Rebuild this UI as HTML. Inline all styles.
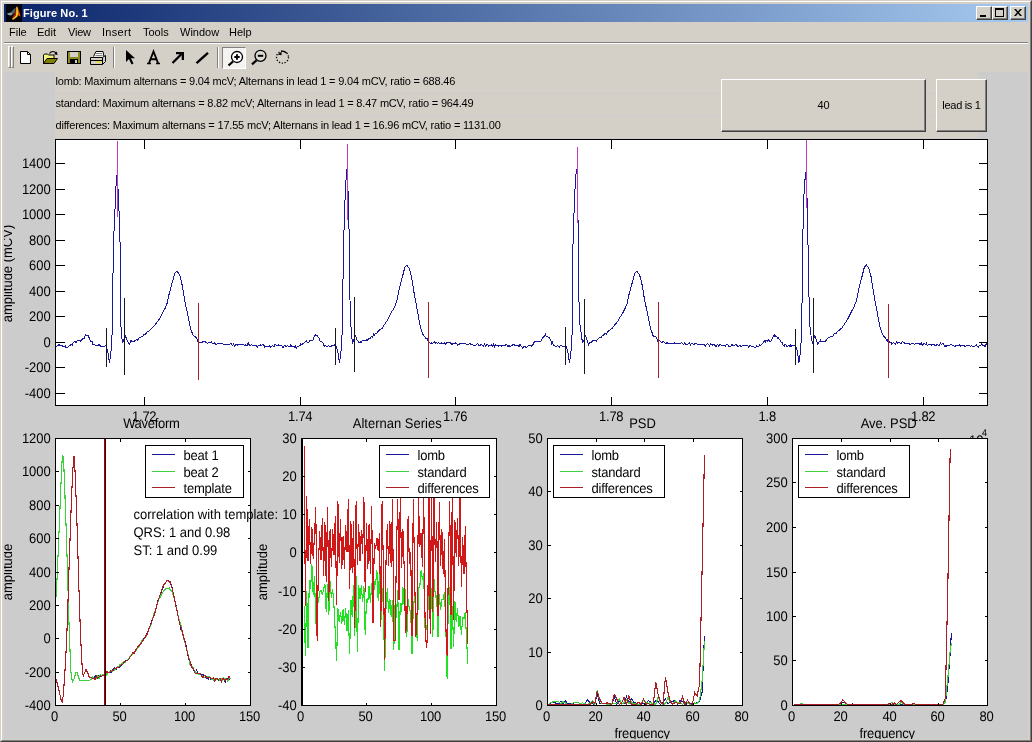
<!DOCTYPE html>
<html><head><meta charset="utf-8"><title>Figure No. 1</title>
<style>
*{box-sizing:border-box;margin:0;padding:0}
html,body{width:1032px;height:742px;overflow:hidden;background:#d4d0c8}
body{position:relative;will-change:transform;font-family:"Liberation Sans",sans-serif;font-size:11px;color:#000}
.abs{position:absolute}
#frame{left:0;top:0;width:1032px;height:742px;border-style:solid;border-width:1px;border-color:#d4d0c8 #404040 #404040 #d4d0c8}
#frame2{left:1px;top:1px;width:1030px;height:740px;border-style:solid;border-width:1px;border-color:#fff #808080 #808080 #fff}
#title{left:4px;top:4px;width:1024px;height:18px;background:linear-gradient(to right,#0a246a 0%,#a6caf0 100%)}
#title .t{left:19px;top:2px;font-weight:bold;font-size:11px;color:#fff;line-height:14px;white-space:nowrap;letter-spacing:0.1px}
.wb{top:6px;width:16px;height:14px;background:#d4d0c8;border-style:solid;border-width:1px;border-color:#fff #404040 #404040 #fff;box-shadow:inset -1px -1px 0 #808080}
#menu{left:4px;top:22px;width:1024px;height:20px}
#menu span{position:absolute;top:3px;line-height:14px;font-size:11px;white-space:nowrap}
#sep1{left:4px;top:42px;width:1024px;height:1px;background:#808080}
#sep2{left:4px;top:43px;width:1024px;height:1px;background:#fff}
#tb{left:4px;top:44px;width:1024px;height:28px}
.grip{top:2px;width:3px;height:22px;border-style:solid;border-width:1px;border-color:#fff #808080 #808080 #fff;background:#d4d0c8}
.vsep{top:3px;width:2px;height:21px;border-left:1px solid #808080;border-right:1px solid #fff}
#fig{position:absolute;left:4px;top:72px;background:#cccccc}
.lab{left:55px;width:923px;height:21px;background:#d4d0c8;font-size:11px;line-height:13px;padding-top:3px;padding-left:0.5px;white-space:nowrap;letter-spacing:-0.19px}
.btn{background:#d4d0c8;border-style:solid;border-width:1px;border-color:#fff #404040 #404040 #fff;box-shadow:inset -1px -1px 0 #808080;font-size:11px;text-align:center;white-space:nowrap}
</style></head><body>
<div id="frame" class="abs"></div><div id="frame2" class="abs"></div>
<div id="title" class="abs">
<svg class="abs" style="left:2px;top:0px" width="16" height="18" viewBox="0 -1 16 18">
<rect y="-1" width="16" height="18" fill="#04040f"/>
<path d="M0.800 8.800L4.500 7.500 7.200 8.500 5 10.500 2.500 10z" fill="#8fa3a3"/>
<path d="M4.500 7.500L8.500 3.500 9.800 2.500 8.500 8.500 7.200 8.500z" fill="#456868"/>
<path d="M10.200 3L10 10 8.500 12 6.200 13.500 7 11 8.500 8.500z" fill="#a81808"/>
<path d="M11.800 2.500L13 6 14.800 11.800 12.500 10.200 11.500 11.500 12.200 8z" fill="#e25410"/>
<path d="M10.300 1.500L11.800 2.500 12.200 8 11.500 11.500 9 13.500 6.800 15 6.200 13.500 8.500 12 10 10 10.200 5z" fill="#ffc81e"/>
<path d="M10.500 2L11.500 3 11.600 7 10.800 7z" fill="#ff9a18"/>
</svg>
<div class="abs t">Figure No. 1</div>
</div>
<div class="abs wb" style="left:976px"><div class="abs" style="left:3px;top:8px;width:6px;height:2px;background:#000"></div></div>
<div class="abs wb" style="left:992px"><div class="abs" style="left:2px;top:1px;width:9px;height:9px;border:1px solid #000;border-top-width:2px"></div></div>
<div class="abs wb" style="left:1010px"><svg class="abs" style="left:3px;top:2px" width="8" height="7" viewBox="0 0 8 7"><path d="M0 0h2l2 2.5L6 0h2L5 3.5 8 7H6L4 4.5 2 7H0l3-3.5z" fill="#000"/></svg></div>
<div id="menu" class="abs"><span style="left:5px">File</span><span style="left:33px">Edit</span><span style="left:64px;letter-spacing:-0.2px">View</span><span style="left:98px;letter-spacing:0.3px">Insert</span><span style="left:139px">Tools</span><span style="left:176px">Window</span><span style="left:225px">Help</span></div>
<div id="sep1" class="abs"></div><div id="sep2" class="abs"></div>
<div id="tb" class="abs">
<div class="abs grip" style="left:4px"></div><div class="abs grip" style="left:7px"></div>
<div class="abs vsep" style="left:109px"></div><div class="abs vsep" style="left:213px"></div>
<div class="abs" style="left:218px;top:3px;width:24px;height:22px;background:#f4f3ef;border-style:solid;border-width:1px;border-color:#808080 #fff #fff #808080"></div>
<svg class="abs" style="left:0;top:0" width="300" height="28" viewBox="4 44 300 28">
<!-- new -->
<path d="M20.5 51.5h7l3 3v9h-10z" fill="#fff" stroke="#000"/><path d="M27.5 51.5v3h3" fill="none" stroke="#000"/>
<!-- open -->
<path d="M43.500 63.500v-8.500l1-1h3l1 1h5.500v3.500" fill="#f4f47a" stroke="#000"/><path d="M43.500 63.500l3.500-5h10.500l-3.500 5z" fill="#808000" stroke="#000"/><path d="M49.500 53.500c1.500-2.500 5-2.800 7 0" fill="none" stroke="#000" stroke-width="1.200"/><path d="M57.500 55l-3.500-.8 3-2.700z" fill="#000"/>
<!-- save -->
<rect x="67.5" y="51.5" width="13" height="12" fill="#8a8a1e" stroke="#000"/><rect x="70" y="52" width="8" height="5" fill="#d4d0c8"/><rect x="70" y="59" width="8" height="5" fill="#000"/><rect x="75" y="60" width="2" height="3" fill="#d4d0c8"/>
<!-- print -->
<path d="M93.5 56.5l2.5-5h7l1 5" fill="#fff" stroke="#000"/><path d="M90.5 57.5h12l3-2v6l-3 3h-12z" fill="#d4d0c8" stroke="#000"/><path d="M90.5 60.5h12M102.500 57.5v7" fill="none" stroke="#000"/><rect x="97" y="61" width="4" height="2" fill="#e8e020"/><path d="M96 53.500h6M95.500 55.500h7" stroke="#808080" fill="none"/>
<!-- pointer -->
<path d="M126 50v12l3-3 2.500 5.500 2-1-2.500-5.200h4z" fill="#000"/>
<!-- A -->
<path d="M149 63l4.500-11.500 4.500 11.500M150.800 59.300h5.400" fill="none" stroke="#000" stroke-width="1.900"/><path d="M147 63.500h4M156 63.500h4" stroke="#000" stroke-width="1.400" fill="none"/>
<!-- arrow -->
<path d="M172.500 63l9-9" fill="none" stroke="#000" stroke-width="2.300"/><path d="M176 52h8v8h-2.300v-5.700h-5.700z" fill="#000"/>
<!-- line -->
<path d="M196.500 63.200l11.500-10.400" fill="none" stroke="#000" stroke-width="2.400"/>
<!-- zoom in -->
<circle cx="237" cy="57" r="5.500" fill="#fff" stroke="#000" stroke-width="1.300"/><path d="M233 61.500l-4.500 4" stroke="#000" stroke-width="2.300" fill="none"/><path d="M234.300 57h5.400M237 54.300v5.400" stroke="#000" stroke-width="1.900" fill="none"/>
<!-- zoom out -->
<circle cx="260.500" cy="55.800" r="5.500" fill="#dedbd4" stroke="#000" stroke-width="1.300"/><path d="M256.500 60.300l-4.500 4" stroke="#000" stroke-width="2.300" fill="none"/><path d="M257.800 55.800h5.400" stroke="#000" stroke-width="2" fill="none"/>
<!-- rotate -->
<circle cx="282.500" cy="57.200" r="6" fill="none" stroke="#000" stroke-width="1.300" stroke-dasharray="1.300 1.600"/><path d="M277.500 54.500l4-2.800v3.600z" fill="#000"/><path d="M281 51.300c2-.4 4 .2 5.500 1.600" fill="none" stroke="#000" stroke-width="1.300"/>
</svg>
</div>
<svg id="fig" width="1024" height="667" viewBox="4 72 1024 667" font-family='"Liberation Sans", sans-serif' shape-rendering="crispEdges" text-rendering="geometricPrecision"><defs><clipPath id="cm"><rect x="55.5" y="139.5" width="932" height="266"/></clipPath><clipPath id="c0"><rect x="55.5" y="438.5" width="195" height="267"/></clipPath><clipPath id="c1"><rect x="301.5" y="438.5" width="195" height="267"/></clipPath><clipPath id="c2"><rect x="547.5" y="438.5" width="195" height="267"/></clipPath><clipPath id="c3"><rect x="792.5" y="438.5" width="195" height="267"/></clipPath></defs><rect x="55.5" y="139.5" width="932" height="266" fill="#fff" stroke="none"/>
<g clip-path="url(#cm)"><polyline points="55.5,347.14 56.62,346.13 57.74,345.87 58.86,344.4 59.98,345.59 60,345.53 61.1,345.97 62.22,345.8 63.34,346.47 64.46,346.38 65.58,345.99 65.7,347.66 66.7,347.33 67.82,347.59 68.94,345.98 70.06,345.27 70.9,344.89 71.18,343.92 72.3,344.94 73.42,342.5 74.54,341.56 75.66,341.41 76,342.41 76.78,341.39 77.9,340.31 79.02,340.42 80.14,341.29 81.2,340.58 81.26,340.05 82.38,339.07 83.5,338.41 84.62,337.95 85.4,334.57 85.74,335.27 86.86,335.91 87.98,335.48 88.7,337.11 89.1,337.61 90.22,340.85 91.34,341.53 92.46,342.03 92.7,344.09 93.58,344.21 94.7,344.29 95.5,345.95 95.82,345.93 96.94,345.6 98.06,346.16 99.18,344.33 100.3,345.7 101.3,346.56 101.42,346.43 102.54,346.49 103.66,346.38 104.78,346.53 105.8,345.3 105.9,345.58 107.02,348.76 107.6,350.4 108.1,353.9 108.14,354.15 109.26,361.03 109.5,362.5 110.38,356.11 111,351.6 111.5,343.24 112.1,333.2 112.62,306.42 112.7,302.3 113.1,266 113.74,241.68 114.1,228 114.86,212.11 115.2,205 115.98,186.48 116,186 116.8,175 117.1,177.67 117.7,183 118.22,192.75 118.5,198 119.34,218.62 119.6,225 120.3,253 120.46,307.08 120.5,320.6 121.58,334.79 121.9,339 122.7,342.02 122.8,342.4 123.82,339.48 124.2,339 124.94,336.65 125.3,335.78 126.06,337.53 126.8,339.42 127.18,340.91 128.3,342.42 128.4,343.07 129.42,344.13 130.54,342.31 131,340.33 131.66,341.12 132.78,341.39 133.9,341.69 135.02,340.67 136.14,339.95 136.4,339.75 137.26,340.17 138.38,339.12 139.5,337.69 140.62,337.14 141.74,336.16 142.86,336.22 143.98,334.35 144.5,334.86 145.1,334.64 146.22,333.44 147.34,331.53 148.46,331.48 149.58,330.17 150.7,329.45 151.82,328.3 152.6,327.47 152.94,327.41 154.06,326.02 155.18,324.54 156.3,323.19 157.42,321.61 158,320.86 158.54,320.03 159.66,318.47 160.78,316.31 161.9,314.11 163.02,312.37 163.4,311.51 164.14,310.01 165.26,307.98 166.38,305.45 166.7,304.9 167.5,301.31 168.62,296.3 169.4,292.8 169.74,291.58 170.86,287.56 171.98,283.54 172.8,280.6 173.1,279.49 174.22,275.35 174.8,273.29 175.34,272.52 176.46,271.82 176.9,270.97 177.58,272.07 178.7,273.49 179.5,274.5 179.82,275.64 180.94,279.64 181.6,282 182.06,284.74 183.18,291.42 184.3,298.1 184.3,298.1 185.42,303.6 186.54,309.1 187.6,314.3 187.66,314.6 188.78,320.2 189.9,325.8 190.3,327.8 191.02,329.77 192.14,332.84 193,334.88 193.26,335.09 194.38,336.69 195.5,336.86 196.62,338.43 197.7,340.49 197.74,341.4 198.86,341.61 199.98,342.96 201.1,342.7 202,342.22 202.22,342.52 203.34,341.13 204.46,341.98 205.58,341.98 206.7,342.99 207.82,343.32 208.94,342.46 210.06,342.48 211.18,341.81 212,342.9 212.3,343.2 213.42,343.42 214.54,342.57 215.66,344.71 216.78,344.18 217.9,343.28 219.02,343.03 220.14,343.25 221.26,343.67 222.38,343.61 223.5,344.05 224.62,344.33 225.74,344.85 226.86,344.75 227.98,343.88 229.1,344.32 230.22,343.8 231.34,343.72 232.46,345.66 233.58,343.95 234.7,345.86 235.82,344.17 236.94,344.69 237,345.32 238.06,344.55 239.18,344.87 240.3,344.43 241.42,344.29 242.54,344.56 243.66,344.23 244.78,345.98 245.9,344.67 247.02,346.13 248.14,342.86 249.26,344.92 250.38,345.37 251.5,344.76 252.62,345.84 253.74,345.54 254.86,344.89 255.98,345.46 257.1,347.28 258.22,345.4 259.34,345.47 260.46,344.95 261.58,345.42 262.7,344.39 263.82,345.25 264.94,347.27 266.06,346.27 267,345.98 267.18,346.33 268.3,346.93 269.42,345.98 270.54,347.1 271.66,346.36 272.78,345.7 273.9,346.88 275.02,343.84 276.14,345.19 277.26,345.83 278.38,344.96 279.5,345.55 280.62,345.2 281.74,345.2 282.86,347.74 283.98,346.19 285.1,345.7 286.22,346.74 287.34,345.59 288.46,346.44 289.58,346.06 290,347.02 290.7,344.88 291.82,346.76 292.94,346.51 294.06,345.79 295.18,347.69 295.7,346.35 296.3,348.02 297.42,346.82 298.54,346.59 299.66,345.77 300.78,346.02 300.9,343.9 301.9,344.57 303.02,343.17 304.14,342.97 305.26,341.85 306,341.76 306.38,340.63 307.5,342.51 308.62,342.73 309.74,340.71 310.86,340.73 311.2,340.92 311.98,340.68 313.1,339.77 314.22,336.06 315.34,335.11 315.4,334.7 316.46,335.4 317.58,335.79 318.7,338.07 318.7,336.93 319.82,340.55 320.94,341.73 322.06,341.9 322.7,342.83 323.18,343.62 324.3,346.25 325.42,345.68 325.5,345.28 326.54,346.26 327.66,346.46 328.78,345.57 329.9,347.16 331.02,346.01 331.3,346.14 332.14,345.07 333.26,345.55 334.38,345.34 335.5,343.63 335.8,345.52 336.62,347.62 337.6,350.4 337.74,351.38 338.1,353.9 338.86,358.57 339.5,363.15 339.98,359.01 341,351.6 341.1,349.93 342.1,333.2 342.22,326.96 342.7,302 343.3,258 343.34,256.44 344.4,215 344.46,213.53 345.5,188 345.58,186.83 346.7,170.46 346.8,169 347.5,180 347.82,187.04 348.5,202 348.94,225.47 349.4,250 350,300 350.06,302.47 350.5,320.6 351.18,329.54 351.9,339 352.3,340.51 352.8,342.61 353.42,340.85 354.2,339 354.54,337.92 355.3,335.6 355.66,336.46 356.78,339.45 356.8,339.5 357.9,340.65 358.4,342.43 359.02,342.47 360.14,342.18 361,341.3 361.26,342.38 362.38,340.39 363.5,340.66 364.62,340.82 365.74,340.25 366.4,340.67 366.86,339.54 367.98,340.23 369.1,338.13 370.22,338.4 371.34,336.74 372.46,337.08 373.58,334.11 374.5,334.89 374.7,334.01 375.82,333.58 376.94,333.38 378.06,331.34 379.18,330.38 380.3,329.52 381.42,328.82 382.54,327.5 382.6,327.82 383.66,325.87 384.78,324.1 385.9,322.46 387.02,320.81 388,319.06 388.14,318.82 389.26,316.78 390.38,314.63 391.5,312.06 392.62,310.37 393.4,308.99 393.74,308.43 394.86,306.14 395.98,303.42 396.7,301.7 397.1,299.76 398.22,294.31 399.34,288.87 399.4,288.58 400.46,284.45 401.58,280.09 402.7,275.73 402.8,275.34 403.82,271.24 404.8,267.21 404.94,267.04 406.06,265.94 406.9,265.02 407.18,265.68 408.3,267.27 409.42,268.75 409.5,268.94 410.54,272.75 411.6,276.86 411.66,277.25 412.78,284.49 413.9,291.74 414.3,294.33 415.02,298.16 416.14,304.13 417.26,310.09 417.6,311.9 418.38,316.13 419.5,322.21 420.3,326.55 420.62,327.5 421.74,330.83 422.86,334.16 423,334.58 423.98,335.81 425.1,337.24 426.22,338.83 427.34,338.94 427.7,340.34 428.46,341.75 429.58,342.42 430.7,343.37 431.82,342.26 432,344 432.94,343.14 434.06,341.66 435.18,343.3 436.3,342.51 437.42,343.21 438.54,342.78 439.66,343.81 440.78,343.14 441.9,342.78 442,343.72 443.02,343.25 444.14,342.82 445.26,344.15 446.38,342.96 447.5,342.85 448.62,342.99 449.74,342.37 450.86,343.12 451.98,344.99 453.1,342.98 454.22,343.74 455.34,342.97 456.46,343.41 457.58,345.07 458.7,344.67 459.82,343.61 460.94,344.14 462.06,343.58 463.18,343.68 464.3,343.65 465.42,343.73 466.54,344.72 467,344.95 467.66,344.89 468.78,344.43 469.9,343.58 471.02,344.58 472.14,343.98 473.26,345.37 474.38,345.16 475.5,345.34 476.62,344.56 477.74,343.5 478.86,345.61 479.98,345.85 481.1,343.86 482.22,345.11 483.34,345.94 484.46,344.28 485.58,346.45 486.7,344.89 487.82,344.39 488.94,346.26 490.06,345.49 491.18,344.82 492.3,346 493.42,343.91 494.54,346.78 495.66,344.84 496.78,345.71 497,345.2 497.9,345.84 499.02,346.19 500.14,344.92 501.26,346.15 502.38,345.35 503.5,345.07 504.62,345.43 505.74,344.86 506.86,345.03 507.98,346.36 509.1,345.54 510.22,346.53 511.34,346.01 512.46,344.93 513.58,344.29 514.7,345.22 515.82,345.94 516.94,345.77 518.06,345.15 519.18,346.55 520,344.49 520.3,344.92 521.42,346.19 522.54,347.98 523.66,346.88 524.78,346.05 525.7,347.44 525.9,347.45 527.02,347.27 528.14,345.89 529.26,345.24 530.38,345.56 530.9,345.61 531.5,346.03 532.62,345.52 533.74,342.52 534.86,341.8 535.98,341.27 536,341.11 537.1,341.54 538.22,341.41 539.34,341.11 540.46,341.79 541.2,340.58 541.58,339.44 542.7,337.67 543.82,336.69 544.94,335.29 545.4,334.09 546.06,336.46 547.18,336.88 548.3,337.2 548.7,337.13 549.42,337.66 550.54,339.78 551.66,343.48 552.7,341.94 552.78,343.79 553.9,345.36 555.02,346.02 555.5,346.16 556.14,346.91 557.26,345.39 558.38,346.52 559.5,347.06 560.62,345.09 561.3,345.19 561.74,345.85 562.86,346.37 563.98,346.51 565.1,345.89 565.8,344.8 566.22,346.49 567.34,349.66 567.6,350.4 568.1,353.9 568.46,356.11 569.5,362.5 569.58,361.92 570.7,353.78 571,351.6 571.82,337.88 572.1,333.2 572.2,300 572.94,249.02 573.1,238 574.06,212.15 574.4,203 575.18,185.27 575.5,178 576.3,172.28 576.8,168.7 577.4,182 577.42,183.23 578.1,225 578.54,272.67 578.7,290 579.6,322 579.66,322.44 580.78,330.72 581.9,339 581.9,339 582.8,343.15 583.02,342.12 584.14,339.25 584.2,338.28 585.26,335.63 585.3,335.5 586.38,338.38 586.8,339.5 587.5,341.8 588.4,344.24 588.62,343.42 589.74,342.94 590.86,342.4 591,342.49 591.98,341.29 593.1,340.75 594.22,340.39 595.34,340.51 596.4,340.71 596.46,340.96 597.58,339.14 598.7,338.77 599.82,337.1 600.94,338 602.06,335.95 603.18,335.71 604.3,334.1 604.5,334.28 605.42,333.22 606.54,334.09 607.66,331.95 608.78,330.93 609.9,329.86 611.02,328.99 612.14,328.29 612.6,328.11 613.26,326.7 614.38,325.39 615.5,324.12 616.62,322.62 617.74,321.02 618,321 618.86,319.64 619.98,317.26 621.1,315.64 622.22,313.83 623.34,311.89 623.4,311.52 624.46,309.88 625.58,307.28 626.7,304.75 626.7,305.08 627.82,299.88 628.94,294.86 629.4,292.8 630.06,290.43 631.18,286.41 632.3,282.39 632.8,280.6 633.42,278.31 634.54,274.16 634.8,273.2 635.66,272.04 636.78,271.4 636.9,271.28 637.9,272.57 639.02,274.05 639.5,275.19 640.14,276.79 641.26,280.79 641.6,282 642.38,286.65 643.5,293.33 644.3,298.1 644.62,299.67 645.74,305.17 646.86,310.67 647.6,314.3 647.98,316.2 649.1,321.8 650.22,327.4 650.3,327.8 651.34,330.65 652.46,333.72 653,335.57 653.58,336.62 654.7,336.84 655.82,337.03 656.94,338.72 657.7,341.86 658.06,340.31 659.18,340.79 660.3,341.19 661.42,342.84 662,342.16 662.54,341.97 663.66,341.54 664.78,342.63 665.9,343.51 667.02,342.69 668.14,343.51 669.26,343.02 670.38,343.05 671.5,343.11 672,343.03 672.62,343.81 673.74,343.47 674.86,342.74 675.98,343.34 677.1,343.25 678.22,343.74 679.34,343.58 680.46,343.82 681.58,342.47 682.7,343.93 683.82,344.69 684.94,342.76 686.06,345.04 687.18,344.13 688.3,343.82 689.42,342.69 690.54,344.93 691.66,343.45 692.78,343.86 693.9,344.72 695.02,343.61 696.14,343.71 697,343.64 697.26,344.43 698.38,344.99 699.5,344.89 700.62,344.93 701.74,344.4 702.86,344.8 703.98,344.22 705.1,346.27 706.22,344.95 707.34,343.38 708.46,344.08 709.58,346.12 710.7,343.93 711.82,344.67 712.94,345.33 714.06,344.25 715.18,345.91 716.3,346.4 717.42,344.56 718.54,346.06 719.66,344.59 720.78,344.54 721.9,345.51 723.02,345.55 724.14,344.96 725.26,346.07 726.38,344.38 727,344.86 727.5,344.7 728.62,346.09 729.74,346.14 730.86,346.05 731.98,344.59 733.1,345.68 734.22,345.94 735.34,344.4 736.46,345.01 737.58,346.13 738.7,346.18 739.82,345.86 740.94,346.09 742.06,345.94 743.18,345.83 744.3,345.65 745.42,345.09 746.54,345.58 747.66,345.47 748.78,347.53 749.5,346 749.9,345.88 751.02,345.95 752.14,346.27 753.26,346.39 754.38,347.24 755.2,346.98 755.5,347.51 756.62,346.01 757.74,346.43 758.86,346.46 759.98,344.57 760.4,345.43 761.1,344.94 762.22,343.62 763.34,342.63 764.46,340.72 765.5,342.16 765.58,340.59 766.7,340.23 767.82,341.53 768.94,339.53 770.06,341.5 770.7,341.03 771.18,340.55 772.3,338.6 773.42,336.42 774.54,334.53 774.9,336.59 775.66,335.68 776.78,336.42 777.9,338.78 778.2,337.33 779.02,338.81 780.14,340.44 781.26,342.13 782.2,342.82 782.38,343.36 783.5,345.86 784.62,346.59 785,344.17 785.74,344.85 786.86,346.46 787.98,346.01 789.1,345.69 790.22,346.64 790.8,344.46 791.34,346.64 792.46,345.71 793.58,345.9 794.7,345.56 795.3,345.93 795.82,346.77 796.94,349.95 797.1,350.4 797.6,353.9 798.06,356.73 799,362.5 799.18,361.19 800.3,353.05 800.5,351.6 801.42,336.21 801.6,333.2 802.2,290 802.54,264.69 803.1,223 803.66,205.08 804.1,191 804.78,182.39 805.6,172 805.9,177.62 807.02,198.62 807.2,202 808.14,251.17 808.5,270 809.26,309.52 809.5,322 810.38,329.87 811.4,339 811.5,339.38 812.3,341.9 812.62,343.51 813.7,339 813.74,338.87 814.8,335.28 814.86,335.66 815.98,338.65 816.3,339.5 817.1,341.84 817.9,344.58 818.22,342.41 819.34,341.64 820.46,340.05 820.5,341.48 821.58,341.74 822.7,341.47 823.82,341.31 824.94,341.54 825.9,340.4 826.06,340.9 827.18,338.67 828.3,337.99 829.42,337.96 830.54,336.36 831.66,336.6 832.78,336.4 833.9,334.87 834,333.95 835.02,333.09 836.14,333.75 837.26,331.65 838.38,330.89 839.5,329.9 840.62,329.03 841.74,328.3 842.1,327.7 842.86,326.32 843.98,325.07 845.1,323.05 846.22,321.35 847.34,319.42 847.5,319.32 848.46,317.6 849.58,315.5 850.7,313.08 851.82,310.95 852.9,309.05 852.94,308.92 854.06,306.52 855.18,303.82 856.2,301.7 856.3,301.22 857.42,295.77 858.54,290.33 858.9,288.58 859.66,285.62 860.78,281.26 861.9,276.9 862.3,275.34 863.02,272.45 864.14,267.95 864.3,267.31 865.26,266.36 866.38,265.17 866.4,264.86 867.5,266.67 868.62,267.77 869,268.81 869.74,271.59 870.86,275.93 871.1,276.86 871.98,282.55 873.1,289.8 873.8,294.33 874.22,296.56 875.34,302.53 876.46,308.49 877.1,311.9 877.58,314.51 878.7,320.58 879.8,326.55 879.82,326.61 880.94,329.94 882.06,333.27 882.5,334.91 883.18,335.33 884.3,337.04 885.42,337.62 886.54,340.52 887.2,341.55 887.66,340.23 888.78,341.41 889.9,342.64 891.02,341.9 891.5,344.13 892.14,343.76 893.26,342.46 894.38,343.45 895.5,344.01 896.62,341.87 897.74,343.31 898.86,342.79 899.98,342.78 901.1,343.52 901.5,342.64 902.22,341.99 903.34,342.04 904.46,343.16 905.58,343.72 906.7,343.29 907.82,343.26 908.94,343.42 910.06,344.48 911.18,343.98 912.3,343.09 913.42,343.5 914.54,344.69 915.66,343.41 916.78,343.62 917.9,343.97 919.02,343.25 920.14,344.8 921.26,342.54 922.38,345.34 923.5,343.99 924.62,343.44 925.74,344.67 926.5,343.22 926.86,344.92 927.98,345.13 929.1,344.15 930.22,344.33 931.34,345.37 932.46,344.2 933.58,344.75 934.7,345.03 935.82,345.98 936.94,344.47 938.06,344.91 939.18,345.77 940.3,343.04 941.42,344.8 942.54,343.6 943.66,343.69 944.78,346.58 945.9,345.31 947.02,346.3 948.14,345.04 949.26,345.66 950.38,344.97 951.5,344.92 952.62,345.31 953.74,345.5 954.86,346.6 955.98,345.34 956.5,345.78 957.1,345.31 958.22,345.61 959.34,344.52 960.46,346.32 961.58,345.11 962.7,345.53 963.82,345.34 964.94,346.24 966.06,345.89 967.18,345.51 968.3,345.63 969.42,345.76 970.54,346.07 971.66,345.88 972.78,346.46 973.9,346.71 975.02,345.96 976.14,344.51 977.26,346.81 978.38,347.11 979.5,345.23 980.62,345.19 981.74,343.96 982.86,346.08 983.98,344.74 985.1,346.87 986.22,343.64 987.34,345.55" fill="none" stroke="#18189a" stroke-width="1" /><line x1="117.5" y1="140.5" x2="117.5" y2="217" stroke="#c23cc2" stroke-width="1" /><line x1="347.5" y1="144" x2="347.5" y2="219.5" stroke="#c23cc2" stroke-width="1" /><line x1="577.5" y1="147" x2="577.5" y2="223" stroke="#c23cc2" stroke-width="1" /><line x1="806.5" y1="139.5" x2="806.5" y2="207.5" stroke="#c23cc2" stroke-width="1" /><line x1="106.5" y1="327.5" x2="106.5" y2="366.5" stroke="#181818" stroke-width="1" /><line x1="335.5" y1="327.5" x2="335.5" y2="365" stroke="#181818" stroke-width="1" /><line x1="565.5" y1="327" x2="565.5" y2="364.5" stroke="#181818" stroke-width="1" /><line x1="795.5" y1="328.5" x2="795.5" y2="365" stroke="#181818" stroke-width="1" /><line x1="124.5" y1="298" x2="124.5" y2="374.5" stroke="#181818" stroke-width="1" /><line x1="354.5" y1="297" x2="354.5" y2="372" stroke="#181818" stroke-width="1" /><line x1="584.5" y1="298.5" x2="584.5" y2="374" stroke="#181818" stroke-width="1" /><line x1="813.5" y1="298" x2="813.5" y2="373" stroke="#181818" stroke-width="1" /><line x1="198.5" y1="303" x2="198.5" y2="379.5" stroke="#aa2024" stroke-width="1" /><line x1="428.5" y1="301.5" x2="428.5" y2="378" stroke="#aa2024" stroke-width="1" /><line x1="658.5" y1="301.5" x2="658.5" y2="378" stroke="#aa2024" stroke-width="1" /><line x1="888.5" y1="304" x2="888.5" y2="378" stroke="#aa2024" stroke-width="1" /></g>
<rect x="55.5" y="139.5" width="932" height="266" fill="none" stroke="#000" stroke-width="1"/><line x1="144.5" y1="405.5" x2="144.5" y2="396.5" stroke="#000" stroke-width="1" /><line x1="144.5" y1="139.5" x2="144.5" y2="148.5" stroke="#000" stroke-width="1" /><text transform="translate(144.2 421.3) scale(1 1.075)" font-size="13" text-anchor="middle" fill="#000" letter-spacing="-0.25">1.72</text><line x1="300.5" y1="405.5" x2="300.5" y2="396.5" stroke="#000" stroke-width="1" /><line x1="300.5" y1="139.5" x2="300.5" y2="148.5" stroke="#000" stroke-width="1" /><text transform="translate(300.2 421.3) scale(1 1.075)" font-size="13" text-anchor="middle" fill="#000" letter-spacing="-0.25">1.74</text><line x1="455.5" y1="405.5" x2="455.5" y2="396.5" stroke="#000" stroke-width="1" /><line x1="455.5" y1="139.5" x2="455.5" y2="148.5" stroke="#000" stroke-width="1" /><text transform="translate(455.2 421.3) scale(1 1.075)" font-size="13" text-anchor="middle" fill="#000" letter-spacing="-0.25">1.76</text><line x1="611.5" y1="405.5" x2="611.5" y2="396.5" stroke="#000" stroke-width="1" /><line x1="611.5" y1="139.5" x2="611.5" y2="148.5" stroke="#000" stroke-width="1" /><text transform="translate(611.2 421.3) scale(1 1.075)" font-size="13" text-anchor="middle" fill="#000" letter-spacing="-0.25">1.78</text><line x1="767.5" y1="405.5" x2="767.5" y2="396.5" stroke="#000" stroke-width="1" /><line x1="767.5" y1="139.5" x2="767.5" y2="148.5" stroke="#000" stroke-width="1" /><text transform="translate(767.2 421.3) scale(1 1.075)" font-size="13" text-anchor="middle" fill="#000" letter-spacing="-0.25">1.8</text><line x1="923.5" y1="405.5" x2="923.5" y2="396.5" stroke="#000" stroke-width="1" /><line x1="923.5" y1="139.5" x2="923.5" y2="148.5" stroke="#000" stroke-width="1" /><text transform="translate(923.2 421.3) scale(1 1.075)" font-size="13" text-anchor="middle" fill="#000" letter-spacing="-0.25">1.82</text><line x1="55.5" y1="393.5" x2="64.5" y2="393.5" stroke="#000" stroke-width="1" /><line x1="987.5" y1="393.5" x2="978.5" y2="393.5" stroke="#000" stroke-width="1" /><text transform="translate(50.8 397.7) scale(1 1.075)" font-size="13" text-anchor="end" fill="#000" >-400</text><line x1="55.5" y1="367.5" x2="64.5" y2="367.5" stroke="#000" stroke-width="1" /><line x1="987.5" y1="367.5" x2="978.5" y2="367.5" stroke="#000" stroke-width="1" /><text transform="translate(50.8 371.7) scale(1 1.075)" font-size="13" text-anchor="end" fill="#000" >-200</text><line x1="55.5" y1="342.5" x2="64.5" y2="342.5" stroke="#000" stroke-width="1" /><line x1="987.5" y1="342.5" x2="978.5" y2="342.5" stroke="#000" stroke-width="1" /><text transform="translate(50.8 346.7) scale(1 1.075)" font-size="13" text-anchor="end" fill="#000" >0</text><line x1="55.5" y1="316.5" x2="64.5" y2="316.5" stroke="#000" stroke-width="1" /><line x1="987.5" y1="316.5" x2="978.5" y2="316.5" stroke="#000" stroke-width="1" /><text transform="translate(50.8 320.7) scale(1 1.075)" font-size="13" text-anchor="end" fill="#000" >200</text><line x1="55.5" y1="291.5" x2="64.5" y2="291.5" stroke="#000" stroke-width="1" /><line x1="987.5" y1="291.5" x2="978.5" y2="291.5" stroke="#000" stroke-width="1" /><text transform="translate(50.8 295.7) scale(1 1.075)" font-size="13" text-anchor="end" fill="#000" >400</text><line x1="55.5" y1="265.5" x2="64.5" y2="265.5" stroke="#000" stroke-width="1" /><line x1="987.5" y1="265.5" x2="978.5" y2="265.5" stroke="#000" stroke-width="1" /><text transform="translate(50.8 269.7) scale(1 1.075)" font-size="13" text-anchor="end" fill="#000" >600</text><line x1="55.5" y1="240.5" x2="64.5" y2="240.5" stroke="#000" stroke-width="1" /><line x1="987.5" y1="240.5" x2="978.5" y2="240.5" stroke="#000" stroke-width="1" /><text transform="translate(50.8 244.7) scale(1 1.075)" font-size="13" text-anchor="end" fill="#000" >800</text><line x1="55.5" y1="214.5" x2="64.5" y2="214.5" stroke="#000" stroke-width="1" /><line x1="987.5" y1="214.5" x2="978.5" y2="214.5" stroke="#000" stroke-width="1" /><text transform="translate(50.8 218.7) scale(1 1.075)" font-size="13" text-anchor="end" fill="#000" >1000</text><line x1="55.5" y1="189.5" x2="64.5" y2="189.5" stroke="#000" stroke-width="1" /><line x1="987.5" y1="189.5" x2="978.5" y2="189.5" stroke="#000" stroke-width="1" /><text transform="translate(50.8 193.7) scale(1 1.075)" font-size="13" text-anchor="end" fill="#000" >1200</text><line x1="55.5" y1="163.5" x2="64.5" y2="163.5" stroke="#000" stroke-width="1" /><line x1="987.5" y1="163.5" x2="978.5" y2="163.5" stroke="#000" stroke-width="1" /><text transform="translate(50.8 167.7) scale(1 1.075)" font-size="13" text-anchor="end" fill="#000" >1400</text><text transform="translate(11.5,273.5) rotate(-90) scale(1 1.075)" font-size="13" text-anchor="middle">amplitude (mCV)</text>
<text transform="translate(969 444.5) scale(1 1.075)" font-size="13" text-anchor="start" fill="#000" >10</text>
<text transform="translate(982 435.5) scale(1 1.075)" font-size="9" text-anchor="start" fill="#000" >4</text>
<rect x="55.5" y="438.5" width="195" height="267" fill="#fff"/>
<rect x="301.5" y="438.5" width="195" height="267" fill="#fff"/>
<rect x="547.5" y="438.5" width="195" height="267" fill="#fff"/>
<rect x="792.5" y="438.5" width="195" height="267" fill="#fff"/>
<text transform="translate(151.3 427.6) scale(1 1.075)" font-size="13" text-anchor="middle" fill="#000" letter-spacing="-0.3">Waveform</text>
<text transform="translate(397.2 427.6) scale(1 1.075)" font-size="13" text-anchor="middle" fill="#000" letter-spacing="0">Alternan Series</text>
<text transform="translate(642.5 427.6) scale(1 1.075)" font-size="13" text-anchor="middle" fill="#000" letter-spacing="0">PSD</text>
<text transform="translate(888.7 427.6) scale(1 1.075)" font-size="13" text-anchor="middle" fill="#000" letter-spacing="0">Ave. PSD</text>
<g clip-path="url(#c0)"><polyline points="55.5,677.97 57.45,683.81 59.4,692.15 61.09,699.66 62.13,702.16 63.17,696.32 64.6,677.13 66.55,642.59 67.85,605.38 69.15,564.99 70.32,530.28 71.36,502.41 72.66,471.88 73.96,456.36 75,470.21 76.56,509.76 77.6,543.63 78.77,583.68 80.07,622.06 81.37,653.77 82.28,668.79 83.19,675.96 84.62,672.96 86.18,669.29 87.74,672.96 89.43,677.63 91.9,677.97 92.55,678.1 93.85,678.52 95.15,675.87 96.45,677.65 97.75,676.89 99.05,675.21 100.35,676.78 101.65,675.98 102.95,674.78 104.25,674.67 105.55,674.82 106.85,673.38 108.15,672.9 109.45,671.48 110.75,672.76 112.05,671.35 113.35,669.08 114.65,667.65 115.95,669.63 117.25,667 118.55,667.52 119.85,666.58 121.15,665.62 122.45,664.13 123.75,661.84 125.05,660.96 126.35,660.39 127.65,659.63 128.95,658.04 130.25,656.67 131.55,654.46 132.85,654.19 134.15,652.11 135.45,650.52 136.75,648.81 138.05,646.89 139.35,645.26 140.65,642.64 141.95,642.16 143.25,639.12 144.55,638.59 145.85,636.23 147.15,633.24 148.45,630.53 149.75,627.47 151.05,622.86 152.35,619.23 153.65,616.02 154.95,612.47 156.25,607.54 157.55,601.55 158.85,598.24 160.15,595.62 161.45,591.21 162.75,588.1 164.05,584.53 165.35,583.45 166.65,580.25 167.95,580.95 169.25,581.52 170.55,582.88 171.85,586.94 173.15,593.19 174.45,599.02 175.75,604.14 177.05,610.9 178.35,616.21 179.65,623.15 180.95,629.78 182.25,631.04 183.55,637.72 184.85,640.58 186.15,646.06 187.45,653.17 188.75,658.55 190.05,663.52 191.35,664.69 192.65,667.92 193.95,670.59 195.25,672.32 196.55,670.14 197.85,673.28 199.15,673.56 200.45,674.18 201.75,674.35 203.05,674.8 204.35,677.66 205.65,677.5 206.95,678.65 208.25,678.92 209.55,676.78 210.85,679.3 212.15,678.96 213.45,679.88 214.75,679.84 216.05,678.1 217.35,679.85 218.65,679.98 219.95,678.74 221.25,678.8 222.55,678.48 223.85,679.37 225.15,681.94 226.45,678.69 227.75,678.8 229.05,678.04 230.35,680.46" fill="none" stroke="#18189a" stroke-width="1.1" /><polyline points="55.5,599.53 56.28,594.69 57.71,563.66 59.2,528.11 60.96,484.06 62,461.86 62.91,455.19 63.82,465.2 64.8,491.07 66.03,525.27 67.33,564.99 69.15,628.07 70.71,668.45 71.36,677.63 72.66,681.3 74.09,678.8 75.78,672.96 77.08,672.12 78.64,677.97 80.2,680.8 84.1,680.47 88,680.8 91.25,679.63 92.55,676.84 93.85,678.86 95.15,678.43 96.45,678.52 97.75,676.12 99.05,678.83 100.35,674.28 101.65,676.25 102.95,674.62 104.25,674.65 105.55,672.36 106.85,675.27 108.15,672.92 109.45,672.37 110.75,670.24 112.05,671.86 113.35,670.21 114.65,670.08 115.95,668.33 117.25,666.95 118.55,667.8 119.85,664.72 121.15,663.99 122.45,663.28 123.75,661.77 125.05,662.24 126.35,660.57 127.65,660.27 128.95,658.31 130.25,656.05 131.55,655.82 132.85,654.06 134.15,652.79 135.45,651.28 136.75,649.43 138.05,647.11 139.35,646.54 140.65,643.52 141.95,640.43 143.25,639.68 144.55,638.52 145.85,636.72 147.15,634.07 148.45,629.13 149.75,627.64 151.05,624.58 152.35,619.99 153.65,614.33 154.95,612.07 156.25,606.84 157.55,602.43 158.85,599.41 160.15,597.59 161.45,594.18 162.75,592.25 164.05,590.47 165.35,589.24 166.65,588.38 167.95,588.39 169.25,587.91 170.55,590.44 171.85,591.43 173.15,595.16 174.45,599.28 175.75,604.61 177.05,611.29 178.35,616.2 179.65,621.57 180.95,625.21 182.25,633.1 183.55,637.6 184.85,642.37 186.15,647.41 187.45,651.94 188.75,657.27 190.05,664.38 191.35,665.72 192.65,666.92 193.95,669.86 195.25,671.36 196.55,673.29 197.85,674.07 199.15,674.26 200.45,674.56 201.75,675.4 203.05,676.02 204.35,677.79 205.65,676.61 206.95,677.44 208.25,676.16 209.55,676.38 210.85,678.34 212.15,679.45 213.45,679.97 214.75,678.37 216.05,679.03 217.35,679.8 218.65,679.26 219.95,680.39 221.25,678.35 222.55,680.25 223.85,677.64 225.15,678.95 226.45,678.58 227.75,681.22 229.05,679.13 230.35,678.15" fill="none" stroke="#3fd03f" stroke-width="1.1" /><polyline points="55.5,677.97 57.45,683.81 59.4,692.15 61.09,699.66 62.13,702.16 63.17,696.32 64.6,677.13 66.55,642.59 67.85,605.38 69.15,564.99 70.32,530.28 71.36,502.41 72.66,471.88 73.96,456.36 75,470.21 76.56,509.76 77.6,543.63 78.77,583.68 80.07,622.06 81.37,653.77 82.28,668.79 83.19,675.96 84.62,672.96 86.18,669.29 87.74,672.96 89.43,677.63 91.9,677.97 92.55,678.74 93.85,678.28 95.15,679.33 96.45,676.35 97.75,678.18 99.05,677.09 100.35,675.69 101.65,676.31 102.95,675.65 104.25,675.01 105.55,673.45 106.85,671.68 108.15,672.57 109.45,672.73 110.75,671.01 112.05,671.16 113.35,670.05 114.65,668.42 115.95,668.87 117.25,667.53 118.55,667.29 119.85,665.97 121.15,664.72 122.45,664.44 123.75,662.89 125.05,661.71 126.35,660.87 127.65,660.12 128.95,658.99 130.25,656.69 131.55,655.3 132.85,652.18 134.15,653.73 135.45,650.36 136.75,648.52 138.05,646.19 139.35,645.09 140.65,644.32 141.95,642.09 143.25,640.06 144.55,638.54 145.85,635.32 147.15,634.57 148.45,629.67 149.75,626.71 151.05,624.16 152.35,619.78 153.65,616.4 154.95,612.74 156.25,607.4 157.55,602.07 158.85,598.68 160.15,594.78 161.45,590.68 162.75,587.19 164.05,584.21 165.35,583.07 166.65,580.96 167.95,580.52 169.25,582.03 170.55,581.96 171.85,587.29 173.15,592.75 174.45,598.11 175.75,605.98 177.05,610.88 178.35,617.65 179.65,624.05 180.95,627.05 182.25,631.21 183.55,636.59 184.85,641.3 186.15,647.83 187.45,652.77 188.75,658.32 190.05,661.29 191.35,667.19 192.65,667.81 193.95,669.63 195.25,673.48 196.55,673.13 197.85,673.83 199.15,673.68 200.45,673.88 201.75,676.14 203.05,677.69 204.35,675.25 205.65,675.91 206.95,678.13 208.25,677.59 209.55,677.89 210.85,678.03 212.15,678.63 213.45,677.45 214.75,680.91 216.05,678.04 217.35,678.84 218.65,679.57 219.95,678.15 221.25,681.97 222.55,678.29 223.85,679.19 225.15,680.81 226.45,679.07 227.75,679.79 229.05,676.64 230.35,677.37" fill="none" stroke="#aa2024" stroke-width="1.1" /><line x1="104.5" y1="438.5" x2="104.5" y2="705.5" stroke="#a00000" stroke-width="1" /><line x1="105.5" y1="438.5" x2="105.5" y2="705.5" stroke="#3a0000" stroke-width="1" /></g>
<rect x="55.5" y="438.5" width="195" height="267" fill="none" stroke="#000" stroke-width="1"/><line x1="55.5" y1="705.5" x2="55.5" y2="702.5" stroke="#000" stroke-width="1" /><line x1="55.5" y1="438.5" x2="55.5" y2="441.5" stroke="#000" stroke-width="1" /><text transform="translate(54.5 720.5) scale(1 1.075)" font-size="13" text-anchor="middle" fill="#000" letter-spacing="-0.3">0</text><line x1="120.5" y1="705.5" x2="120.5" y2="702.5" stroke="#000" stroke-width="1" /><line x1="120.5" y1="438.5" x2="120.5" y2="441.5" stroke="#000" stroke-width="1" /><text transform="translate(119.5 720.5) scale(1 1.075)" font-size="13" text-anchor="middle" fill="#000" letter-spacing="-0.3">50</text><line x1="185.5" y1="705.5" x2="185.5" y2="702.5" stroke="#000" stroke-width="1" /><line x1="185.5" y1="438.5" x2="185.5" y2="441.5" stroke="#000" stroke-width="1" /><text transform="translate(184.5 720.5) scale(1 1.075)" font-size="13" text-anchor="middle" fill="#000" letter-spacing="-0.3">100</text><line x1="250.5" y1="705.5" x2="250.5" y2="702.5" stroke="#000" stroke-width="1" /><line x1="250.5" y1="438.5" x2="250.5" y2="441.5" stroke="#000" stroke-width="1" /><text transform="translate(249.5 720.5) scale(1 1.075)" font-size="13" text-anchor="middle" fill="#000" letter-spacing="-0.3">150</text><line x1="55.5" y1="705.5" x2="58.5" y2="705.5" stroke="#000" stroke-width="1" /><line x1="250.5" y1="705.5" x2="247.5" y2="705.5" stroke="#000" stroke-width="1" /><text transform="translate(50.8 709.7) scale(1 1.075)" font-size="13" text-anchor="end" fill="#000" >-400</text><line x1="55.5" y1="672.5" x2="58.5" y2="672.5" stroke="#000" stroke-width="1" /><line x1="250.5" y1="672.5" x2="247.5" y2="672.5" stroke="#000" stroke-width="1" /><text transform="translate(50.8 676.7) scale(1 1.075)" font-size="13" text-anchor="end" fill="#000" >-200</text><line x1="55.5" y1="638.5" x2="58.5" y2="638.5" stroke="#000" stroke-width="1" /><line x1="250.5" y1="638.5" x2="247.5" y2="638.5" stroke="#000" stroke-width="1" /><text transform="translate(50.8 642.7) scale(1 1.075)" font-size="13" text-anchor="end" fill="#000" >0</text><line x1="55.5" y1="605.5" x2="58.5" y2="605.5" stroke="#000" stroke-width="1" /><line x1="250.5" y1="605.5" x2="247.5" y2="605.5" stroke="#000" stroke-width="1" /><text transform="translate(50.8 609.7) scale(1 1.075)" font-size="13" text-anchor="end" fill="#000" >200</text><line x1="55.5" y1="572.5" x2="58.5" y2="572.5" stroke="#000" stroke-width="1" /><line x1="250.5" y1="572.5" x2="247.5" y2="572.5" stroke="#000" stroke-width="1" /><text transform="translate(50.8 576.7) scale(1 1.075)" font-size="13" text-anchor="end" fill="#000" >400</text><line x1="55.5" y1="538.5" x2="58.5" y2="538.5" stroke="#000" stroke-width="1" /><line x1="250.5" y1="538.5" x2="247.5" y2="538.5" stroke="#000" stroke-width="1" /><text transform="translate(50.8 542.7) scale(1 1.075)" font-size="13" text-anchor="end" fill="#000" >600</text><line x1="55.5" y1="505.5" x2="58.5" y2="505.5" stroke="#000" stroke-width="1" /><line x1="250.5" y1="505.5" x2="247.5" y2="505.5" stroke="#000" stroke-width="1" /><text transform="translate(50.8 509.7) scale(1 1.075)" font-size="13" text-anchor="end" fill="#000" >800</text><line x1="55.5" y1="471.5" x2="58.5" y2="471.5" stroke="#000" stroke-width="1" /><line x1="250.5" y1="471.5" x2="247.5" y2="471.5" stroke="#000" stroke-width="1" /><text transform="translate(50.8 475.7) scale(1 1.075)" font-size="13" text-anchor="end" fill="#000" >1000</text><line x1="55.5" y1="438.5" x2="58.5" y2="438.5" stroke="#000" stroke-width="1" /><line x1="250.5" y1="438.5" x2="247.5" y2="438.5" stroke="#000" stroke-width="1" /><text transform="translate(50.8 442.7) scale(1 1.075)" font-size="13" text-anchor="end" fill="#000" >1200</text>
<rect x="145.5" y="445.5" width="98" height="52" fill="#fff" stroke="#000" stroke-width="1"/><line x1="151.5" y1="454.5" x2="174.5" y2="454.5" stroke="#18189a" stroke-width="1.2" /><text transform="translate(183.5 459.6) scale(1 1.075)" font-size="13" text-anchor="start" fill="#000" letter-spacing="-0.2">beat 1</text><line x1="151.5" y1="471.5" x2="174.5" y2="471.5" stroke="#3fd03f" stroke-width="1.2" /><text transform="translate(183.5 476.6) scale(1 1.075)" font-size="13" text-anchor="start" fill="#000" letter-spacing="-0.2">beat 2</text><line x1="151.5" y1="487.5" x2="174.5" y2="487.5" stroke="#aa2024" stroke-width="1.2" /><text transform="translate(183.5 492.6) scale(1 1.075)" font-size="13" text-anchor="start" fill="#000" letter-spacing="-0.2">template</text>
<text transform="translate(133.5 518.5) scale(1 1.075)" font-size="13" text-anchor="start" fill="#000" >correlation with template:</text>
<text transform="translate(133.5 536.5) scale(1 1.075)" font-size="13" text-anchor="start" fill="#000" >QRS: 1 and 0.98</text>
<text transform="translate(133.5 554.5) scale(1 1.075)" font-size="13" text-anchor="start" fill="#000" >ST: 1 and 0.99</text>
<text transform="translate(11.5,572) rotate(-90) scale(1 1.075)" font-size="13" text-anchor="middle">amplitude</text>
<g clip-path="url(#c1)"><polyline points="304.1,606.33 305.4,655.91 306.7,591.07 308,648.15 309.3,580.05 310.6,588.64 311.9,563.87 313.2,595.12 314.5,576.08 315.8,624.1 317.1,600.37 318.4,601.68 319.7,591.84 321,590.66 322.3,595.24 323.6,588.99 324.9,583.86 326.2,611.48 327.5,584.18 328.8,615.23 330.1,580.81 331.4,598.27 332.7,589.2 334,606.46 335.3,633.03 336.6,661.26 337.9,608.06 339.2,622.14 340.5,611.66 341.8,624.3 343.1,609.18 344.4,624.75 345.7,608.37 347,631.37 348.3,610.18 349.6,654.2 350.9,599.65 352.2,616.95 353.5,585.15 354.8,635.62 356.1,576.01 357.4,652.1 358.7,584.99 360,599.23 361.3,585.51 362.6,602.02 363.9,585.71 365.2,634.66 366.5,599.22 367.8,601.85 369.1,585.56 370.4,603.42 371.7,583.07 373,617.04 374.3,580.92 375.6,583.6 376.9,570.38 378.2,600.85 379.5,571.36 380.8,624.92 382.1,588.3 383.4,607.25 384.7,671.17 386,606.99 387.3,588.46 388.6,612.55 389.9,599.49 391.2,616.61 392.5,600.04 393.8,649.69 395.1,603.57 396.4,617.54 397.7,590.34 399,649.6 400.3,602.57 401.6,611.6 402.9,586.81 404.2,605.63 405.5,588.85 406.8,637.1 408.1,599.11 409.4,609.8 410.7,611 412,654.08 413.3,607.2 414.6,596.27 415.9,615.99 417.2,640.74 418.5,588.18 419.8,586.88 421.1,570.31 422.4,579.7 423.7,572.95 425,627.63 426.3,629.21 427.6,621.85 428.9,580.86 430.2,601.31 431.5,588.36 432.8,636.87 434.1,579.2 435.4,596.93 436.7,595.18 438,637 439.3,594.44 440.6,610.24 441.9,599.66 443.2,599.26 444.5,592.01 445.8,627.37 447.1,678.8 448.4,596.74 449.7,587.53 451,649.48 452.3,605.84 453.6,647.46 454.9,600.77 456.2,621.54 457.5,608.21 458.8,626.78 460.1,615.94 461.4,634.86 462.7,617.42 464,618.49 465.3,611.89 466.6,640.56 467.9,663.54" fill="none" stroke="#22e022" stroke-width="1.1" /><polyline points="304.1,446.13 305.4,606.33 306.7,495.71 308,560.56 309.3,518.6 310.6,564.37 311.9,527.27 313.2,559.02 314.5,535.18 315.8,507.16 317.1,640.66 318.4,565.75 319.7,530.95 321,559.56 322.3,517.74 323.6,575.83 324.9,521.95 326.2,582.39 327.5,506.58 328.8,601.23 330.1,529.15 331.4,567.35 332.7,529.22 334,554.55 335.3,515.84 336.6,604.73 337.9,501.05 339.2,563.29 340.5,518.95 341.8,569.13 343.1,535.95 344.4,568.98 345.7,525.33 347,551.62 348.3,499.03 349.6,589.36 350.9,520.9 352.2,573.34 353.5,521.37 354.8,627.67 356.1,500.63 357.4,565.2 358.7,524.47 360,560.66 361.3,530.42 362.6,554.11 363.9,497.5 365.2,591.76 366.5,522.55 367.8,569.34 369.1,523.65 370.4,573.78 371.7,506.16 373,622.91 374.3,543.41 375.6,549.38 376.9,537.88 378.2,550.87 379.5,533.11 380.8,627.47 382.1,501.1 383.4,566.58 384.7,659.73 386,561.83 387.3,523.59 388.6,566.22 389.9,521.08 391.2,567.48 392.5,499.29 393.8,640.72 395.1,640.66 396.4,553.85 397.7,499.34 399,600.37 400.3,493.63 401.6,568.47 402.9,528.64 404.2,567.67 405.5,633.03 406.8,628.43 408.1,516.27 409.4,564.16 410.7,552.26 412,636.48 413.3,499.02 414.6,573.94 415.9,636.84 417.2,610.47 418.5,498.45 419.8,547.2 421.1,532.6 422.4,567.1 423.7,492.01 425,616.3 426.3,648.29 427.6,637.92 428.9,490.01 430.2,633.58 431.5,494.07 432.8,611.71 434.1,493.27 435.4,562.23 436.7,522.3 438,615.91 439.3,501.88 440.6,565.5 441.9,529.12 443.2,573.83 444.5,539.22 445.8,625.55 447.1,655.91 448.4,563.7 449.7,501.21 451,615.31 452.3,488.5 453.6,619.81 454.9,520.26 456.2,557.25 457.5,517.53 458.8,566.37 460.1,493.95 461.4,587.26 462.7,536.78 464,573.7 465.3,526.46 466.6,596.32 467.9,644.47" fill="none" stroke="#d01818" stroke-width="1.1" /><line x1="302.5" y1="438.5" x2="302.5" y2="705.5" stroke="#000" stroke-width="1" /></g>
<rect x="301.5" y="438.5" width="195" height="267" fill="none" stroke="#000" stroke-width="1"/><line x1="301.5" y1="705.5" x2="301.5" y2="702.5" stroke="#000" stroke-width="1" /><line x1="301.5" y1="438.5" x2="301.5" y2="441.5" stroke="#000" stroke-width="1" /><text transform="translate(300.5 720.5) scale(1 1.075)" font-size="13" text-anchor="middle" fill="#000" letter-spacing="-0.3">0</text><line x1="366.5" y1="705.5" x2="366.5" y2="702.5" stroke="#000" stroke-width="1" /><line x1="366.5" y1="438.5" x2="366.5" y2="441.5" stroke="#000" stroke-width="1" /><text transform="translate(365.5 720.5) scale(1 1.075)" font-size="13" text-anchor="middle" fill="#000" letter-spacing="-0.3">50</text><line x1="431.5" y1="705.5" x2="431.5" y2="702.5" stroke="#000" stroke-width="1" /><line x1="431.5" y1="438.5" x2="431.5" y2="441.5" stroke="#000" stroke-width="1" /><text transform="translate(430.5 720.5) scale(1 1.075)" font-size="13" text-anchor="middle" fill="#000" letter-spacing="-0.3">100</text><line x1="496.5" y1="705.5" x2="496.5" y2="702.5" stroke="#000" stroke-width="1" /><line x1="496.5" y1="438.5" x2="496.5" y2="441.5" stroke="#000" stroke-width="1" /><text transform="translate(495.5 720.5) scale(1 1.075)" font-size="13" text-anchor="middle" fill="#000" letter-spacing="-0.3">150</text><line x1="301.5" y1="705.5" x2="304.5" y2="705.5" stroke="#000" stroke-width="1" /><line x1="496.5" y1="705.5" x2="493.5" y2="705.5" stroke="#000" stroke-width="1" /><text transform="translate(296.8 709.7) scale(1 1.075)" font-size="13" text-anchor="end" fill="#000" >-40</text><line x1="301.5" y1="667.5" x2="304.5" y2="667.5" stroke="#000" stroke-width="1" /><line x1="496.5" y1="667.5" x2="493.5" y2="667.5" stroke="#000" stroke-width="1" /><text transform="translate(296.8 671.7) scale(1 1.075)" font-size="13" text-anchor="end" fill="#000" >-30</text><line x1="301.5" y1="629.5" x2="304.5" y2="629.5" stroke="#000" stroke-width="1" /><line x1="496.5" y1="629.5" x2="493.5" y2="629.5" stroke="#000" stroke-width="1" /><text transform="translate(296.8 633.7) scale(1 1.075)" font-size="13" text-anchor="end" fill="#000" >-20</text><line x1="301.5" y1="591.5" x2="304.5" y2="591.5" stroke="#000" stroke-width="1" /><line x1="496.5" y1="591.5" x2="493.5" y2="591.5" stroke="#000" stroke-width="1" /><text transform="translate(296.8 595.7) scale(1 1.075)" font-size="13" text-anchor="end" fill="#000" >-10</text><line x1="301.5" y1="552.5" x2="304.5" y2="552.5" stroke="#000" stroke-width="1" /><line x1="496.5" y1="552.5" x2="493.5" y2="552.5" stroke="#000" stroke-width="1" /><text transform="translate(296.8 556.7) scale(1 1.075)" font-size="13" text-anchor="end" fill="#000" >0</text><line x1="301.5" y1="514.5" x2="304.5" y2="514.5" stroke="#000" stroke-width="1" /><line x1="496.5" y1="514.5" x2="493.5" y2="514.5" stroke="#000" stroke-width="1" /><text transform="translate(296.8 518.7) scale(1 1.075)" font-size="13" text-anchor="end" fill="#000" >10</text><line x1="301.5" y1="476.5" x2="304.5" y2="476.5" stroke="#000" stroke-width="1" /><line x1="496.5" y1="476.5" x2="493.5" y2="476.5" stroke="#000" stroke-width="1" /><text transform="translate(296.8 480.7) scale(1 1.075)" font-size="13" text-anchor="end" fill="#000" >20</text><line x1="301.5" y1="438.5" x2="304.5" y2="438.5" stroke="#000" stroke-width="1" /><line x1="496.5" y1="438.5" x2="493.5" y2="438.5" stroke="#000" stroke-width="1" /><text transform="translate(296.8 442.7) scale(1 1.075)" font-size="13" text-anchor="end" fill="#000" >30</text>
<rect x="379.5" y="445.5" width="110" height="52" fill="#fff" stroke="#000" stroke-width="1"/><line x1="385.5" y1="454.5" x2="408.5" y2="454.5" stroke="#18189a" stroke-width="1.2" /><text transform="translate(417.5 459.6) scale(1 1.075)" font-size="13" text-anchor="start" fill="#000" letter-spacing="-0.2">lomb</text><line x1="385.5" y1="471.5" x2="408.5" y2="471.5" stroke="#3fd03f" stroke-width="1.2" /><text transform="translate(417.5 476.6) scale(1 1.075)" font-size="13" text-anchor="start" fill="#000" letter-spacing="-0.2">standard</text><line x1="385.5" y1="487.5" x2="408.5" y2="487.5" stroke="#aa2024" stroke-width="1.2" /><text transform="translate(417.5 492.6) scale(1 1.075)" font-size="13" text-anchor="start" fill="#000" letter-spacing="-0.2">differences</text>
<text transform="translate(266.5,572) rotate(-90) scale(1 1.075)" font-size="13" text-anchor="middle">amplitude</text>
<g clip-path="url(#c2)"><polyline points="548.48,704.68 550.91,702.52 553.35,702.09 555.79,703.07 558.23,704.32 560.66,701.23 563.1,704.24 565.54,700.8 567.98,704.05 570.41,703.31 572.85,703.25 575.29,702.8 577.73,702.72 580.16,703.37 582.6,704.3 585.04,703.28 587.48,699.63 589.91,702.57 592.35,703.76 594.79,704.55 597.23,693.75 599.66,703.59 602.1,703.23 604.54,703.87 606.98,703.8 609.41,703.78 611.85,703.76 614.29,696.96 616.73,704.38 619.16,701.42 621.6,703.52 624.04,703.77 626.48,696.42 628.91,703.12 631.35,698.56 633.79,702.4 636.23,703.34 638.66,704.61 641.1,703.79 643.54,703.17 645.98,704.17 648.41,700.33 650.85,702.52 653.29,703.84 655.73,700.52 658.16,701.93 660.6,704.67 663.04,701.99 665.48,698.56 667.91,704 670.35,702.04 672.79,701.37 675.23,700.16 677.66,704.01 680.1,700.5 682.54,701.53 684.98,704.13 687.41,703.93 689.85,703.29 692.29,703.94 694.73,703.18 697.16,702.97 699.6,701.23 702.04,692.15 704.48,636.08" fill="none" stroke="#18189a" stroke-width="1.1" /><polyline points="548.48,703.3 550.91,702.83 553.35,701.45 555.79,701.96 558.23,701.23 560.66,703.51 563.1,701.71 565.54,703.06 567.98,704.52 570.41,704.59 572.85,703.04 575.29,702.27 577.73,702.08 580.16,703.83 582.6,702.71 585.04,703.97 587.48,704.13 589.91,703.72 592.35,700.53 594.79,704.63 597.23,690.55 599.66,700.16 602.1,703.49 604.54,703.67 606.98,704.31 609.41,704.05 611.85,703.64 614.29,703.93 616.73,703.75 619.16,698.56 621.6,704.14 624.04,702.61 626.48,700.16 628.91,703.38 631.35,702 633.79,703.87 636.23,703.82 638.66,704.51 641.1,704.59 643.54,700.24 645.98,702.41 648.41,703.18 650.85,702.91 653.29,703.51 655.73,704.43 658.16,696.96 660.6,702.76 663.04,704.38 665.48,703.81 667.91,697.49 670.35,702.34 672.79,703.63 675.23,700.69 677.66,702.55 680.1,703.14 682.54,704.16 684.98,702.84 687.41,703 689.85,704.65 692.29,704.25 694.73,703 697.16,703.54 699.6,700.16 702.04,681.47 704.48,641.42" fill="none" stroke="#3fd03f" stroke-width="1.1" /><polyline points="548.48,704.66 550.91,704.85 553.35,704.4 555.79,704.8 558.23,704.6 560.66,704.41 563.1,704.58 565.54,704.62 567.98,704.43 570.41,704.85 572.85,704.55 575.29,704.64 577.73,704.33 580.16,704.43 582.6,704.83 585.04,704.76 587.48,704.62 589.91,704.48 592.35,701.87 594.79,703.49 597.23,691.62 599.66,699.09 602.1,703.07 604.54,703.91 606.98,702.84 609.41,703.37 611.85,704.59 614.29,694.29 616.73,699.09 619.16,704.5 621.6,703.22 624.04,697.49 626.48,704.69 628.91,695.89 631.35,704.6 633.79,704.23 636.23,704.33 638.66,702.2 641.1,704.54 643.54,699.09 645.98,704.13 648.41,703.81 650.85,704.51 653.29,704.03 655.73,682 658.16,694.82 660.6,702.57 663.04,703.77 665.48,676.66 667.91,692.15 670.35,702.06 672.79,704.29 675.23,702.25 677.66,703.41 680.1,703.62 682.54,696.96 684.98,704.5 687.41,700.16 689.85,703.47 692.29,704.47 694.73,692.68 697.16,695.89 699.6,684.14 702.04,572 704.48,454.52" fill="none" stroke="#aa2024" stroke-width="1.1" /></g>
<rect x="547.5" y="438.5" width="195" height="267" fill="none" stroke="#000" stroke-width="1"/><line x1="547.5" y1="705.5" x2="547.5" y2="702.5" stroke="#000" stroke-width="1" /><line x1="547.5" y1="438.5" x2="547.5" y2="441.5" stroke="#000" stroke-width="1" /><text transform="translate(546.5 720.5) scale(1 1.075)" font-size="13" text-anchor="middle" fill="#000" letter-spacing="-0.3">0</text><line x1="596.5" y1="705.5" x2="596.5" y2="702.5" stroke="#000" stroke-width="1" /><line x1="596.5" y1="438.5" x2="596.5" y2="441.5" stroke="#000" stroke-width="1" /><text transform="translate(595.5 720.5) scale(1 1.075)" font-size="13" text-anchor="middle" fill="#000" letter-spacing="-0.3">20</text><line x1="644.5" y1="705.5" x2="644.5" y2="702.5" stroke="#000" stroke-width="1" /><line x1="644.5" y1="438.5" x2="644.5" y2="441.5" stroke="#000" stroke-width="1" /><text transform="translate(643.5 720.5) scale(1 1.075)" font-size="13" text-anchor="middle" fill="#000" letter-spacing="-0.3">40</text><line x1="693.5" y1="705.5" x2="693.5" y2="702.5" stroke="#000" stroke-width="1" /><line x1="693.5" y1="438.5" x2="693.5" y2="441.5" stroke="#000" stroke-width="1" /><text transform="translate(692.5 720.5) scale(1 1.075)" font-size="13" text-anchor="middle" fill="#000" letter-spacing="-0.3">60</text><line x1="742.5" y1="705.5" x2="742.5" y2="702.5" stroke="#000" stroke-width="1" /><line x1="742.5" y1="438.5" x2="742.5" y2="441.5" stroke="#000" stroke-width="1" /><text transform="translate(741.5 720.5) scale(1 1.075)" font-size="13" text-anchor="middle" fill="#000" letter-spacing="-0.3">80</text><line x1="547.5" y1="705.5" x2="550.5" y2="705.5" stroke="#000" stroke-width="1" /><line x1="742.5" y1="705.5" x2="739.5" y2="705.5" stroke="#000" stroke-width="1" /><text transform="translate(542.8 709.7) scale(1 1.075)" font-size="13" text-anchor="end" fill="#000" >0</text><line x1="547.5" y1="652.5" x2="550.5" y2="652.5" stroke="#000" stroke-width="1" /><line x1="742.5" y1="652.5" x2="739.5" y2="652.5" stroke="#000" stroke-width="1" /><text transform="translate(542.8 656.7) scale(1 1.075)" font-size="13" text-anchor="end" fill="#000" >10</text><line x1="547.5" y1="598.5" x2="550.5" y2="598.5" stroke="#000" stroke-width="1" /><line x1="742.5" y1="598.5" x2="739.5" y2="598.5" stroke="#000" stroke-width="1" /><text transform="translate(542.8 602.7) scale(1 1.075)" font-size="13" text-anchor="end" fill="#000" >20</text><line x1="547.5" y1="545.5" x2="550.5" y2="545.5" stroke="#000" stroke-width="1" /><line x1="742.5" y1="545.5" x2="739.5" y2="545.5" stroke="#000" stroke-width="1" /><text transform="translate(542.8 549.7) scale(1 1.075)" font-size="13" text-anchor="end" fill="#000" >30</text><line x1="547.5" y1="491.5" x2="550.5" y2="491.5" stroke="#000" stroke-width="1" /><line x1="742.5" y1="491.5" x2="739.5" y2="491.5" stroke="#000" stroke-width="1" /><text transform="translate(542.8 495.7) scale(1 1.075)" font-size="13" text-anchor="end" fill="#000" >40</text><line x1="547.5" y1="438.5" x2="550.5" y2="438.5" stroke="#000" stroke-width="1" /><line x1="742.5" y1="438.5" x2="739.5" y2="438.5" stroke="#000" stroke-width="1" /><text transform="translate(542.8 442.7) scale(1 1.075)" font-size="13" text-anchor="end" fill="#000" >50</text>
<rect x="553.5" y="445.5" width="111" height="52" fill="#fff" stroke="#000" stroke-width="1"/><line x1="559.5" y1="454.5" x2="582.5" y2="454.5" stroke="#18189a" stroke-width="1.2" /><text transform="translate(591.5 459.6) scale(1 1.075)" font-size="13" text-anchor="start" fill="#000" letter-spacing="-0.2">lomb</text><line x1="559.5" y1="471.5" x2="582.5" y2="471.5" stroke="#3fd03f" stroke-width="1.2" /><text transform="translate(591.5 476.6) scale(1 1.075)" font-size="13" text-anchor="start" fill="#000" letter-spacing="-0.2">standard</text><line x1="559.5" y1="487.5" x2="582.5" y2="487.5" stroke="#aa2024" stroke-width="1.2" /><text transform="translate(591.5 492.6) scale(1 1.075)" font-size="13" text-anchor="start" fill="#000" letter-spacing="-0.2">differences</text>
<text transform="translate(642.2 738) scale(1 1.075)" font-size="13" text-anchor="middle" fill="#000" letter-spacing="-0.2">frequency</text>
<g clip-path="url(#c3)"><polyline points="794.21,704.97 796.64,704.97 799.08,704.97 801.52,704.97 803.96,704.97 806.39,704.97 808.83,704.97 811.27,704.97 813.71,704.97 816.14,704.97 818.58,704.97 821.02,704.97 823.46,704.97 825.89,704.97 828.33,704.97 830.77,704.97 833.21,704.97 835.64,704.97 838.08,704.97 840.52,704.97 842.96,701.94 845.39,703.27 847.83,704.97 850.27,704.97 852.71,703.72 855.14,704.97 857.58,704.97 860.02,704.97 862.46,704.97 864.89,704.97 867.33,704.97 869.77,704.97 872.21,704.97 874.64,704.97 877.08,704.97 879.52,704.97 881.96,704.97 884.39,704.97 886.83,704.97 889.27,704.97 891.71,704.97 894.14,704.97 896.58,704.97 899.02,704.97 901.46,704.97 903.89,704.97 906.33,704.97 908.77,704.97 911.21,704.97 913.64,704.97 916.08,704.97 918.52,704.97 920.96,704.97 923.39,704.97 925.83,704.97 928.27,704.97 930.71,704.97 933.14,704.97 935.58,704.97 938.02,704.97 940.46,704.97 942.89,704.97 945.33,702.83 947.77,685.92 950.21,652.1 951.42,632.52" fill="none" stroke="#18189a" stroke-width="1.1" /><polyline points="794.21,704.97 796.64,704.97 799.08,704.97 801.52,703.27 803.96,704.97 806.39,704.97 808.83,704.97 811.27,704.97 813.71,704.97 816.14,704.97 818.58,704.97 821.02,704.97 823.46,704.97 825.89,704.97 828.33,704.97 830.77,704.97 833.21,704.97 835.64,704.97 838.08,704.97 840.52,704.97 842.96,704.97 845.39,704.97 847.83,704.97 850.27,704.97 852.71,704.97 855.14,704.97 857.58,704.97 860.02,704.97 862.46,704.97 864.89,704.97 867.33,704.97 869.77,704.97 872.21,704.97 874.64,704.97 877.08,704.97 879.52,704.97 881.96,704.97 884.39,704.97 886.83,704.97 889.27,704.97 891.71,702.38 894.14,703.72 896.58,704.97 899.02,704.97 901.46,701.94 903.89,704.97 906.33,704.97 908.77,704.97 911.21,704.97 913.64,704.97 916.08,704.97 918.52,704.97 920.96,704.97 923.39,704.97 925.83,704.97 928.27,704.97 930.71,704.97 933.14,704.97 935.58,704.97 938.02,704.97 940.46,704.97 942.89,704.97 945.33,701.94 947.77,678.8 950.21,650.32 951.42,643.2" fill="none" stroke="#3fd03f" stroke-width="1.1" /><polyline points="794.21,704.61 796.64,704.61 799.08,704.61 801.52,704.61 803.96,704.61 806.39,704.61 808.83,704.61 811.27,704.61 813.71,704.61 816.14,704.61 818.58,704.61 821.02,704.61 823.46,704.61 825.89,704.61 828.33,704.61 830.77,704.61 833.21,704.61 835.64,704.61 838.08,704.61 840.52,703.27 842.96,699.72 845.39,702.83 847.83,704.61 850.27,704.61 852.71,704.61 855.14,704.61 857.58,704.61 860.02,704.61 862.46,704.61 864.89,704.61 867.33,704.61 869.77,704.61 872.21,704.61 874.64,704.61 877.08,704.61 879.52,704.61 881.96,704.61 884.39,704.61 886.83,704.61 889.27,703.72 891.71,704.61 894.14,702.83 896.58,704.61 899.02,701.94 901.46,700.61 903.89,703.72 906.33,704.61 908.77,704.61 911.21,704.61 913.64,703.27 916.08,704.61 918.52,704.61 920.96,704.61 923.39,704.61 925.83,704.61 928.27,704.61 930.71,704.61 933.14,704.61 935.58,704.61 938.02,704.61 940.46,704.61 942.89,704.61 945.33,698.38 947.77,589.8 950.21,449.18" fill="none" stroke="#aa2024" stroke-width="1.1" /></g>
<rect x="792.5" y="438.5" width="195" height="267" fill="none" stroke="#000" stroke-width="1"/><line x1="792.5" y1="705.5" x2="792.5" y2="702.5" stroke="#000" stroke-width="1" /><line x1="792.5" y1="438.5" x2="792.5" y2="441.5" stroke="#000" stroke-width="1" /><text transform="translate(791.5 720.5) scale(1 1.075)" font-size="13" text-anchor="middle" fill="#000" letter-spacing="-0.3">0</text><line x1="841.5" y1="705.5" x2="841.5" y2="702.5" stroke="#000" stroke-width="1" /><line x1="841.5" y1="438.5" x2="841.5" y2="441.5" stroke="#000" stroke-width="1" /><text transform="translate(840.5 720.5) scale(1 1.075)" font-size="13" text-anchor="middle" fill="#000" letter-spacing="-0.3">20</text><line x1="890.5" y1="705.5" x2="890.5" y2="702.5" stroke="#000" stroke-width="1" /><line x1="890.5" y1="438.5" x2="890.5" y2="441.5" stroke="#000" stroke-width="1" /><text transform="translate(889.5 720.5) scale(1 1.075)" font-size="13" text-anchor="middle" fill="#000" letter-spacing="-0.3">40</text><line x1="938.5" y1="705.5" x2="938.5" y2="702.5" stroke="#000" stroke-width="1" /><line x1="938.5" y1="438.5" x2="938.5" y2="441.5" stroke="#000" stroke-width="1" /><text transform="translate(937.5 720.5) scale(1 1.075)" font-size="13" text-anchor="middle" fill="#000" letter-spacing="-0.3">60</text><line x1="987.5" y1="705.5" x2="987.5" y2="702.5" stroke="#000" stroke-width="1" /><line x1="987.5" y1="438.5" x2="987.5" y2="441.5" stroke="#000" stroke-width="1" /><text transform="translate(986.5 720.5) scale(1 1.075)" font-size="13" text-anchor="middle" fill="#000" letter-spacing="-0.3">80</text><line x1="792.5" y1="705.5" x2="795.5" y2="705.5" stroke="#000" stroke-width="1" /><line x1="987.5" y1="705.5" x2="984.5" y2="705.5" stroke="#000" stroke-width="1" /><text transform="translate(787.8 709.7) scale(1 1.075)" font-size="13" text-anchor="end" fill="#000" >0</text><line x1="792.5" y1="660.5" x2="795.5" y2="660.5" stroke="#000" stroke-width="1" /><line x1="987.5" y1="660.5" x2="984.5" y2="660.5" stroke="#000" stroke-width="1" /><text transform="translate(787.8 664.7) scale(1 1.075)" font-size="13" text-anchor="end" fill="#000" >50</text><line x1="792.5" y1="616.5" x2="795.5" y2="616.5" stroke="#000" stroke-width="1" /><line x1="987.5" y1="616.5" x2="984.5" y2="616.5" stroke="#000" stroke-width="1" /><text transform="translate(787.8 620.7) scale(1 1.075)" font-size="13" text-anchor="end" fill="#000" >100</text><line x1="792.5" y1="572.5" x2="795.5" y2="572.5" stroke="#000" stroke-width="1" /><line x1="987.5" y1="572.5" x2="984.5" y2="572.5" stroke="#000" stroke-width="1" /><text transform="translate(787.8 576.7) scale(1 1.075)" font-size="13" text-anchor="end" fill="#000" >150</text><line x1="792.5" y1="527.5" x2="795.5" y2="527.5" stroke="#000" stroke-width="1" /><line x1="987.5" y1="527.5" x2="984.5" y2="527.5" stroke="#000" stroke-width="1" /><text transform="translate(787.8 531.7) scale(1 1.075)" font-size="13" text-anchor="end" fill="#000" >200</text><line x1="792.5" y1="482.5" x2="795.5" y2="482.5" stroke="#000" stroke-width="1" /><line x1="987.5" y1="482.5" x2="984.5" y2="482.5" stroke="#000" stroke-width="1" /><text transform="translate(787.8 486.7) scale(1 1.075)" font-size="13" text-anchor="end" fill="#000" >250</text><line x1="792.5" y1="438.5" x2="795.5" y2="438.5" stroke="#000" stroke-width="1" /><line x1="987.5" y1="438.5" x2="984.5" y2="438.5" stroke="#000" stroke-width="1" /><text transform="translate(787.8 442.7) scale(1 1.075)" font-size="13" text-anchor="end" fill="#000" >300</text>
<rect x="798.5" y="445.5" width="111" height="52" fill="#fff" stroke="#000" stroke-width="1"/><line x1="804.5" y1="454.5" x2="827.5" y2="454.5" stroke="#18189a" stroke-width="1.2" /><text transform="translate(836.5 459.6) scale(1 1.075)" font-size="13" text-anchor="start" fill="#000" letter-spacing="-0.2">lomb</text><line x1="804.5" y1="471.5" x2="827.5" y2="471.5" stroke="#3fd03f" stroke-width="1.2" /><text transform="translate(836.5 476.6) scale(1 1.075)" font-size="13" text-anchor="start" fill="#000" letter-spacing="-0.2">standard</text><line x1="804.5" y1="487.5" x2="827.5" y2="487.5" stroke="#aa2024" stroke-width="1.2" /><text transform="translate(836.5 492.6) scale(1 1.075)" font-size="13" text-anchor="start" fill="#000" letter-spacing="-0.2">differences</text>
<text transform="translate(887.2 738) scale(1 1.075)" font-size="13" text-anchor="middle" fill="#000" letter-spacing="-0.2">frequency</text></svg>
<div class="abs lab" style="top:72px">lomb: Maximum alternans = 9.04 mcV; Alternans in lead 1 = 9.04 mCV, ratio = 688.46</div>
<div class="abs lab" style="top:94px">standard: Maximum alternans = 8.82 mcV; Alternans in lead 1 = 8.47 mCV, ratio = 964.49</div>
<div class="abs lab" style="top:116px;height:22px">differences: Maximum alternans = 17.55 mcV; Alternans in lead 1 = 16.96 mCV, ratio = 1131.00</div>
<div class="abs btn" style="left:721px;top:79px;width:205px;height:53px;line-height:50px">40</div>
<div class="abs btn" style="left:936px;top:79px;width:51px;height:53px;line-height:50px;letter-spacing:-0.3px">lead is 1</div>
</body></html>
